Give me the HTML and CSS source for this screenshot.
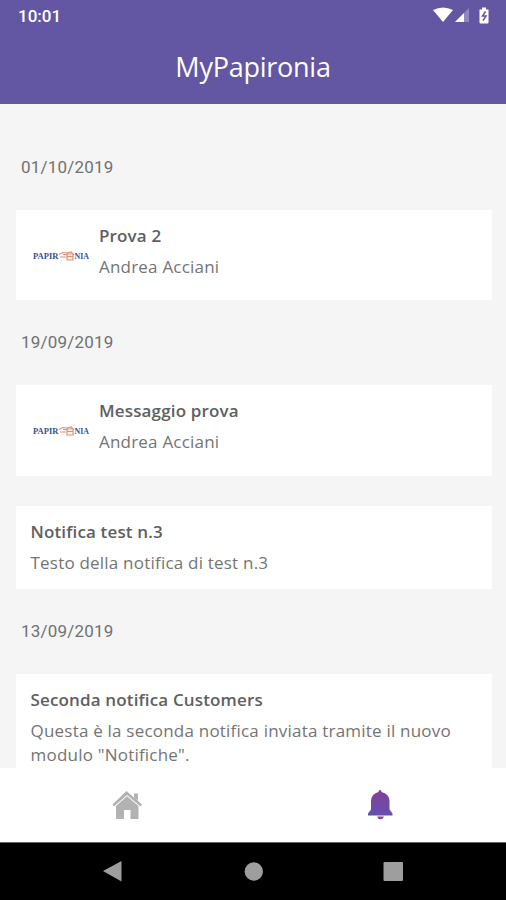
FILE: index.html
```
<!DOCTYPE html>
<html lang="it">
<head>
<meta charset="utf-8">
<title>MyPapironia</title>
<link rel="stylesheet" href="styles.css">
</head>
<body>
<div class="app">
  <header class="header">
    <div class="status">
      <span>10:01</span>
      <svg class="status-icons" width="58" height="18" viewBox="0 0 58 18">
        <path fill="#fff" d="M0 3Q10-2 20 3L10 15Z"/>
        <path fill="#9188bf" d="M22 15L36 1V15Z"/>
        <path fill="#fff" d="M22 15L31 6V15Z"/>
        <path fill="#fff" d="M49 0.500h4v2h2.500v13q0 1-1 1h-7q-1 0-1-1v-13h2.500Z"/>
        <path fill="none" stroke="#6356a2" stroke-width="1.500" d="M52.500 4.500L49.500 9h3.500L50 13.500"/>
      </svg>
    </div>
    <h1 class="title">MyPapironia</h1>
  </header>
  <main class="list">
    <h2 class="date">01/10/2019</h2>
    <article class="card with-logo">
      <svg class="logo" width="58" height="14" viewBox="0 0 58 14">
        <text class="logo-text" x="0" y="10" textLength="25.500" lengthAdjust="spacingAndGlyphs">PAPIR</text>
        <text class="logo-text" x="41.500" y="10" textLength="14.500" lengthAdjust="spacingAndGlyphs">NIA</text>
        <path class="logo-mark" d="M26 5.500L30 3.500L34 4L38 3L41 6M27 8h6M30 5.500h4M34 5v6h6v-6ZM34 7.500h6"/>
      </svg>
      <div class="copy"><h3>Prova 2</h3><p>Andrea Acciani</p></div>
    </article>
    <h2 class="date">19/09/2019</h2>
    <article class="card with-logo">
      <svg class="logo" width="58" height="14" viewBox="0 0 58 14">
        <text class="logo-text" x="0" y="10" textLength="25.500" lengthAdjust="spacingAndGlyphs">PAPIR</text>
        <text class="logo-text" x="41.500" y="10" textLength="14.500" lengthAdjust="spacingAndGlyphs">NIA</text>
        <path class="logo-mark" d="M26 5.500L30 3.500L34 4L38 3L41 6M27 8h6M30 5.500h4M34 5v6h6v-6ZM34 7.500h6"/>
      </svg>
      <div class="copy"><h3>Messaggio prova</h3><p>Andrea Acciani</p></div>
    </article>
    <article class="card follow">
      <div class="copy"><h3>Notifica test n.3</h3><p>Testo della notifica di test n.3</p></div>
    </article>
    <h2 class="date">13/09/2019</h2>
    <article class="card last">
      <div class="copy"><h3>Seconda notifica Customers</h3><p>Questa è la seconda notifica inviata tramite il nuovo modulo "Notifiche".</p></div>
    </article>
  </main>
  <nav class="tabs">
    <svg width="32" height="32" viewBox="0 0 32 32">
      <path fill="#b2b2b2" d="M15.500 3L31 16.500L29.500 18.500L16 7L3 18.500L1.500 16.500Z"/>
      <path fill="#b2b2b2" d="M23 5.500h4V13l-4-3.500ZM16 8.200L27.500 18V31H19.500V22h-6.500V31H5V18Z"/>
    </svg>
    <svg width="32" height="32" viewBox="0 0 32 32">
      <defs><linearGradient id="bell" x1="0" y1="0" x2="0" y2="1"><stop offset="0" stop-color="#82409a"/><stop offset="1" stop-color="#6650ae"/></linearGradient></defs>
      <path fill="url(#bell)" d="M14.500 4q0-2 1.500-2t1.500 2q7.500 1.500 8 9V21.500l3 4V27.500H4V25.500L7 21.500V13Q7.500 5.500 14.500 4Z"/>
      <path fill="#824596" d="M13 28.500h7q-1 2.800-3.500 2.800t-3.500-2.800Z"/>
    </svg>
  </nav>
  <footer class="system">
    <svg width="506" height="57" viewBox="0 0 506 57">
      <path fill="#9e9e9e" d="M103 28L121.500 18V38.500Z"/>
      <circle fill="#9e9e9e" cx="253.800" cy="28.500" r="9.200"/>
      <rect fill="#9e9e9e" x="383.500" y="19" width="19.500" height="19" rx="1"/>
    </svg>
  </footer>
</div>
</body>
</html>
```
FILE: styles.css
```
* { box-sizing: border-box; }
body { margin: 0; font-family: "Open Sans", sans-serif; }
h1, h2, h3, p { margin: 0; }
svg { display: block; flex: none; }
.app { width: 506px; height: 900px; display: flex; flex-direction: column; overflow: hidden; background: #f5f5f5; }
.header { height: 104px; flex: none; background: #6356a2; color: #fff; }
.status { height: 32px; display: flex; justify-content: space-between; padding: 6px 15px 0 18px; font: 500 17px/20px Roboto, sans-serif; }
.status-icons { margin-top: 1px; }
.title { text-align: center; font-size: 27px; line-height: 36px; font-weight: 400; letter-spacing: -0.250px; padding-top: 17px; }
.list { flex: 1; min-height: 0; overflow: hidden; padding: 21px 14px 0 16px; }
.date { height: 85px; padding: 32px 0 0 5px; font: 400 17px/20px Roboto, sans-serif; letter-spacing: 0.200px; color: #717171; }
.card { background: #fff; padding: 14px 14px 0 14.500px; height: 83.500px; color: #747474; }
.with-logo { display: flex; height: 90.300px; padding-left: 17px; }
.logo { margin: 25px 8px 0 0; }
.logo-text { font: 700 8px "Liberation Serif", serif; fill: #365295; }
.logo-mark { fill: none; stroke: #e58e70; stroke-width: 1.200; }
.follow { margin-top: 30px; }
.last { height: 110px; }
h3 { font-size: 17px; line-height: 24px; font-weight: 600; letter-spacing: 0.150px; color: #606060; }
p { font-size: 17px; line-height: 24px; margin-top: 7px; letter-spacing: 0.210px; }
.tabs { height: 74px; flex: none; display: flex; justify-content: space-around; padding-top: 20px; background: #fff; }
.system { height: 58px; flex: none; background: #000; border-top: 1px solid #666; }
```
